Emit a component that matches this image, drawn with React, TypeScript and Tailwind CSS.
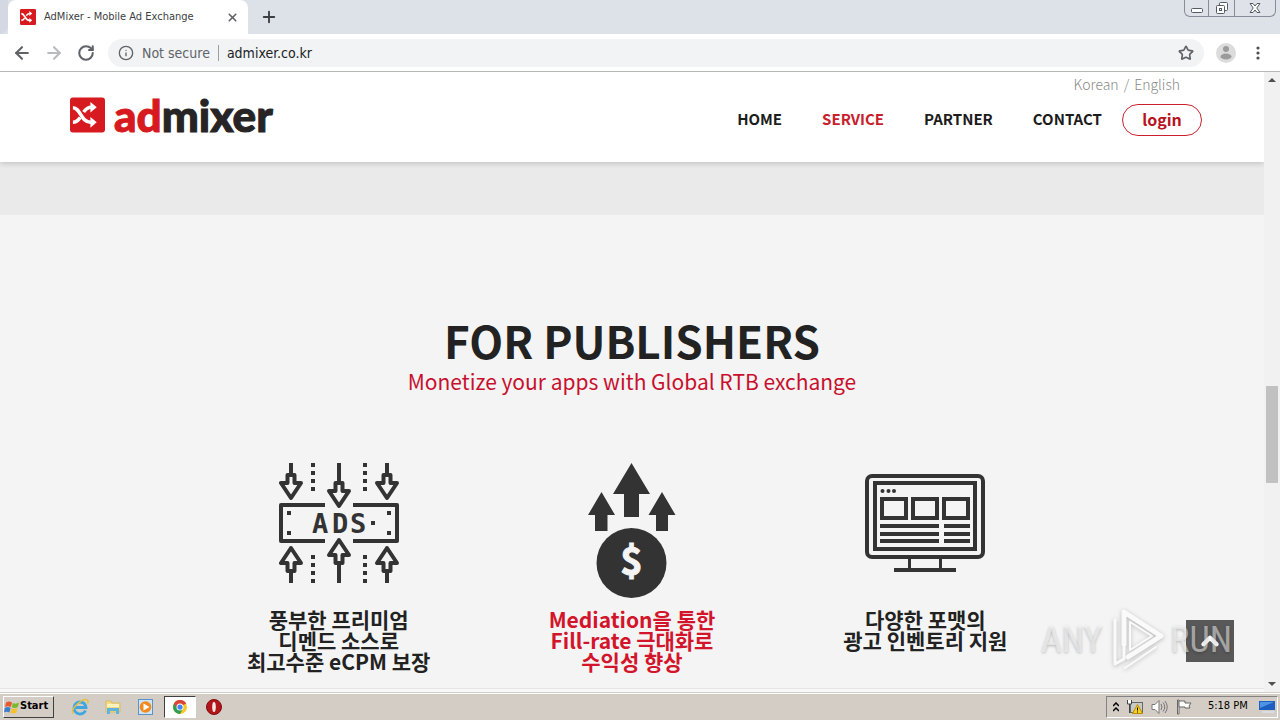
import { useState } from 'react';
import { ArrowLeft, ArrowRight, ChevronUp, Info, Plus, RotateCw, Star, X } from 'lucide-react';

interface Feature {
  id: string;
  lines: string[];
  active?: boolean;
  icon: React.ReactNode;
}

const navItems = [
  { label: 'HOME', active: false },
  { label: 'SERVICE', active: true },
  { label: 'PARTNER', active: false },
  { label: 'CONTACT', active: false },
];

function ShuffleMark({ className }: { className: string }) {
  return (
    <svg viewBox="0 0 36 36" className={className}>
      <rect width="36" height="36" rx="3" fill="#d71920" />
      <g fill="none" stroke="#fff" strokeWidth="3.6">
        <path d="M3 10.500c8 0 8 15 18 15h2" />
        <path d="M3 25.500c3.500 0 5.500-2 7.500-5M14 15c2-3 4-5 8-5" />
      </g>
      <path d="M21 4.500 27.500 10 21 15.500zM21 20 27.500 25.500 21 31z" fill="#fff" />
    </svg>
  );
}

function ArrowDownShape({ x, y, shaft }: { x: number; y: number; shaft: number }) {
  return (
    <>
      <path d={`M${x} ${y - shaft}V${y}`} />
      <path d={`M${x - 3.5} ${y + 1}h7v8h6.500L${x} ${y + 24}l-10 -15h6.500z`} />
    </>
  );
}

function AdsIcon() {
  const dots = [2, 10, 18, 26, 94, 102, 110, 118];
  return (
    <svg viewBox="0 0 120 120" className="h-[120px] w-[120px]">
      <g fill="none" stroke="#333" strokeWidth="4" strokeLinejoin="round">
        <ArrowDownShape x={12} y={11} shaft={11} />
        <ArrowDownShape x={60} y={19} shaft={19} />
        <ArrowDownShape x={108} y={11} shaft={11} />
        <g transform="matrix(1 0 0 -1 0 120)">
          <ArrowDownShape x={12} y={11} shaft={11} />
          <ArrowDownShape x={60} y={19} shaft={19} />
          <ArrowDownShape x={108} y={11} shaft={11} />
        </g>
        <path d="M46 42H2v36h44M74 42h44v36H74" />
      </g>
      <g fill="#333">
        {dots.map((y) => (
          <g key={y}>
            <rect x="32" y={y - 2} width="4" height="4" />
            <rect x="84" y={y - 2} width="4" height="4" />
          </g>
        ))}
        <rect x="8" y="48" width="4" height="4" />
        <rect x="108" y="48" width="4" height="4" />
        <rect x="8" y="68" width="4" height="4" />
        <rect x="108" y="68" width="4" height="4" />
        <rect x="92" y="58" width="4" height="4" />
        <text x="33 53 71" y="70" fontSize="27" fontWeight="700" fontFamily="'DejaVu Sans Mono', monospace">ADS</text>
      </g>
    </svg>
  );
}

function GrowthIcon() {
  return (
    <svg viewBox="0 0 88 136" className="h-[136px] w-[88px]">
      <g fill="#333">
        <path d="M43.500 0 62 31H51v23H36V31H25z" />
        <path d="M13.500 29 27 52h-7.500v16H7V52H0z" />
        <path d="M74 29 87.500 52H80v16H68V52h-7.500z" />
        <circle cx="43.500" cy="100" r="35" />
      </g>
      <text x="43.500" y="112" fill="#f4f4f4" stroke="#f4f4f4" strokeWidth="1" fontSize="38" fontWeight="700" textAnchor="middle" fontFamily="'Noto Sans CJK KR', sans-serif">$</text>
    </svg>
  );
}

function MonitorIcon() {
  return (
    <svg viewBox="0 -11 120 120" className="h-[120px] w-[120px]">
      <g fill="none" stroke="#333" strokeWidth="4">
        <rect x="2" y="2" width="116" height="81" rx="5" />
        <rect x="10" y="9" width="100" height="66" />
        <rect x="17" y="25" width="24" height="19" />
        <rect x="48" y="25" width="24" height="19" />
        <rect x="79" y="25" width="24" height="19" />
        <path d="M15 52h59M79 52h26M15 60h59M79 60h26M15 67h59M79 67h26" />
        <path d="M44.500 84v12M75.500 84v12" strokeWidth="3" />
        <path d="M29 96h62" />
      </g>
      <g fill="#333">
        <circle cx="17.500" cy="17" r="2" />
        <circle cx="23.500" cy="17" r="2" />
        <circle cx="29" cy="17" r="2" />
      </g>
    </svg>
  );
}

const features: Feature[] = [
  { id: 'premium', lines: ['풍부한 프리미엄', '디멘드 소스로', '최고수준 eCPM 보장'], icon: <AdsIcon /> },
  { id: 'mediation', lines: ['Mediation을 통한', 'Fill-rate 극대화로', '수익성 향상'], active: true, icon: <GrowthIcon /> },
  { id: 'formats', lines: ['다양한 포맷의', '광고 인벤토리 지원'], icon: <MonitorIcon /> },
];

function WindowControls() {
  return (
    <div className="mr-1 flex h-[17px] rounded-b-md border border-t-0 border-[#868c98] bg-[#dfe2e9]">
      <button aria-label="Minimize" className="flex w-6 items-center justify-center border-r border-[#868c98]">
        <svg viewBox="0 0 12 12" className="h-3 w-3"><rect x="0.500" y="6.500" width="11" height="4" rx="1" fill="#fff" stroke="#555b66" /></svg>
      </button>
      <button aria-label="Restore" className="flex w-[26px] items-center justify-center border-r border-[#868c98]">
        <svg viewBox="0 0 14 14" className="h-[14px] w-[14px]" fill="#fff" stroke="#555b66">
          <rect x="4.500" y="1.500" width="8" height="8" rx="1" />
          <rect x="1.500" y="4.500" width="8" height="8" rx="1" />
          <rect x="4.500" y="7.500" width="2" height="2" />
        </svg>
      </button>
      <button aria-label="Close window" className="flex w-10 items-center justify-center">
        <svg viewBox="0 0 12 12" className="h-3 w-3">
          <path d="M1 1.500h3l2 2.500 2-2.500h3L7.800 6 11 10.500H8L6 8l-2 2.500H1L4.200 6z" fill="#fff" stroke="#555b66" />
        </svg>
      </button>
    </div>
  );
}

function BrowserBar() {
  const [url, setUrl] = useState('admixer.co.kr');
  return (
    <div className="shrink-0 font-['DejaVu_Sans_Condensed','DejaVu_Sans',sans-serif]">
      <div className="flex h-[34px] justify-between bg-[#dde1e8]">
        <div className="flex">
          <div className="w-2 rounded-br-lg bg-[#d3d8e2]" />
          <div className="flex w-60 items-center rounded-t-lg bg-white pr-2 pl-3">
            <ShuffleMark className="h-4 w-4" />
            <span className="ml-2 flex-1 text-[11px] whitespace-nowrap text-[#3c4043]">AdMixer - Mobile Ad Exchange</span>
            <button aria-label="Close tab" className="flex h-4 w-4 items-center justify-center text-[#5f6368]">
              <X size={13} strokeWidth={3} />
            </button>
          </div>
          <button aria-label="New tab" className="ml-3 text-[#3c4043]">
            <Plus size={18} strokeWidth={2.5} />
          </button>
        </div>
        <WindowControls />
      </div>
      <div className="flex h-[38px] items-center border-b border-[#b5b8b5] bg-white pr-3 pl-3 text-[#5f6368]">
        <button aria-label="Back"><ArrowLeft size={20} strokeWidth={2.5} /></button>
        <button aria-label="Forward" className="ml-3 text-[#b9bbbe]"><ArrowRight size={20} strokeWidth={2.5} /></button>
        <button aria-label="Reload" className="ml-[13px]"><RotateCw size={18} strokeWidth={2.75} /></button>
        <div className="ml-[13px] flex h-7 flex-1 items-center rounded-full bg-[#f1f3f5] pr-[10px] pl-[10px]">
          <Info size={16} />
          <label htmlFor="url" className="ml-2 border-r border-[#9aa0a6] pr-2 text-sm leading-4 whitespace-nowrap">Not secure</label>
          <input
            id="url"
            value={url}
            onChange={(e) => setUrl(e.target.value)}
            className="ml-2 min-w-0 flex-1 bg-transparent text-sm leading-4 text-[#202124] outline-none"
          />
          <button aria-label="Bookmark"><Star size={16} strokeWidth={2.5} /></button>
        </div>
        <button aria-label="Profile" className="ml-3">
          <svg viewBox="0 0 20 20" className="h-5 w-5">
            <circle cx="10" cy="10" r="10" fill="#dcdcdc" />
            <circle cx="10" cy="6" r="3" fill="#9b9b9b" />
            <ellipse cx="10" cy="13.500" rx="5.500" ry="3" fill="#9b9b9b" />
          </svg>
        </button>
        <button aria-label="Menu" className="ml-3">
          <svg viewBox="0 0 20 20" className="h-5 w-5" fill="#4d5156">
            <circle cx="10" cy="5" r="1.600" />
            <circle cx="10" cy="10" r="1.600" />
            <circle cx="10" cy="15" r="1.600" />
          </svg>
        </button>
      </div>
    </div>
  );
}

function SiteHeader() {
  return (
    <header className="relative z-10 flex h-[90px] justify-between bg-white pr-[62px] pl-[70px] shadow-[0_1px_6px_rgba(0,0,0,0.2)]">
      <a href="#home" className="mt-[25px] flex h-9 items-center">
        <ShuffleMark className="h-9 w-[35px]" />
        <span className="ml-[9px] font-['Lato',sans-serif] text-[44px] leading-9 font-black text-[#d71920] [-webkit-text-stroke:1px]">
          ad<span className="text-[#272425]">mixer</span>
        </span>
      </a>
      <div className="flex flex-col items-end">
        <div className="flex h-8 gap-[5px] pt-[2px] pr-[22px] text-[14px] leading-5 font-light text-[#8a8a8a]">
          <a href="#ko">Korean</a>
          <span>/</span>
          <a href="#en">English</a>
        </div>
        <nav className="flex h-8 items-center gap-10 text-[15px] leading-6 font-bold text-[#1c1c1c]">
          {navItems.map((item) => (
            <a key={item.label} href={`#${item.label.toLowerCase()}`} className={`pb-[2px] ${item.active ? 'text-[#c8202c]' : ''}`}>
              {item.label}
            </a>
          ))}
          <button className="-ml-5 h-8 w-20 rounded-full border border-[#c8202c] pb-[2px] text-base leading-6 text-[#b8141f]">login</button>
        </nav>
      </div>
    </header>
  );
}

function Watermark() {
  return (
    <div className="pointer-events-none absolute right-8 bottom-5 flex items-center font-['Liberation_Sans_Narrow','Roboto_Condensed',sans-serif] text-[36px] leading-[64px] text-white/50 [text-shadow:0_1px_3px_rgba(0,0,0,0.25)]">
      <span>ANY</span>
      <svg viewBox="0 0 56 64" className="mr-1 ml-2 h-16 w-14 drop-shadow-[0_1px_2px_rgba(0,0,0,0.25)]" fill="none" stroke="#fafafa" strokeWidth="5" strokeLinejoin="round" strokeLinecap="round">
        <path d="M14 36V4l37 24-33 21" />
        <path d="M5 12v44l9-5V22" strokeWidth="3" />
        <path d="M15 60 46 39M20 14v28l22-14z" strokeWidth="2" />
      </svg>
      <span>RUN</span>
    </div>
  );
}

function Scrollbar() {
  return (
    <div className="flex w-4 shrink-0 flex-col items-center justify-between bg-[#f1f1f1] py-[6px]">
      <svg viewBox="0 0 8 4" className="h-1 w-2"><path d="M0 4 4 0l4 4z" fill="#505050" /></svg>
      <div className="flex w-full flex-1 flex-col items-center">
        <div className="grow-[304]" />
        <div className="h-[97px] w-3 bg-[#c1c1c1]" />
        <div className="grow-[199]" />
      </div>
      <svg viewBox="0 0 8 4" className="h-1 w-2"><path d="m0 0 4 4 4-4z" fill="#505050" /></svg>
    </div>
  );
}

function Taskbar() {
  return (
    <footer className="flex h-7 shrink-0 items-center justify-between border-t border-[#d4cec6] bg-[#d4cdc5] pr-[2px] pl-[3px] font-['DejaVu_Sans_Condensed','DejaVu_Sans',sans-serif] shadow-[inset_0_1px_0_#fff]">
      <div className="flex items-center">
        <button className="flex h-[22px] w-[51px] items-center border border-t-white border-r-[#404040] border-b-[#404040] border-l-white text-[11px] font-bold text-black">
          <svg viewBox="0 0 16 16" className="h-4 w-4 shrink-0">
            <path d="M2 3.500q3-2 6 0L6.800 8q-3-1.500-5.800 0z" fill="#e8592b" />
            <path d="M8.800 4q3 1.500 6.200-.500L13.800 8q-3 1.800-6 .200z" fill="#7ab82e" />
            <path d="M.800 9q3-1.800 5.800 0L5.400 13.500q-3-1.600-5.400 0z" fill="#3b7ed0" />
            <path d="M7.500 9.300q3 1.500 6 0L12.300 13.500q-3 1.800-6 .300z" fill="#f6c12c" />
          </svg>
          Start
        </button>
        <button aria-label="Internet Explorer" className="ml-4 flex h-5 w-5 items-center justify-center">
          <svg viewBox="0 0 18 18" className="h-[18px] w-[18px]" fill="none">
            <path d="M14.500 12.500A6 6 0 1 1 15 9.500H4.500" stroke="#3fa7e0" strokeWidth="2.800" />
            <path d="M2 15.500C-1 11 12-1 16.500 2c1 1 .500 2.500 0 3.500" stroke="#e8bf3a" strokeWidth="1.500" />
          </svg>
        </button>
        <button aria-label="Explorer" className="ml-[13px] flex h-5 w-5 items-center justify-center">
          <svg viewBox="0 0 18 18" className="h-[18px] w-[18px]">
            <path d="M2 3h5l1 2h8v9H2z" fill="#f2dc86" stroke="#d9bd5c" />
            <path d="M3 6h12v3H3z" fill="#fbf2c0" />
            <path d="M3 10h12v6h-3v-3H6v3H3z" fill="#5eb4de" />
          </svg>
        </button>
        <button aria-label="Media Player" className="ml-[13px] flex h-5 w-5 items-center justify-center">
          <svg viewBox="0 0 18 18" className="h-[18px] w-[18px]">
            <rect x="1.500" y="1.500" width="14" height="15" fill="#cfe3f5" stroke="#5a93cc" />
            <circle cx="8.500" cy="9" r="5.800" fill="#f08a1d" />
            <path d="m6.500 5.500 6 3.500-6 3.500z" fill="#fff" />
          </svg>
        </button>
        <button aria-label="Chrome" className="ml-2 flex h-[22px] w-8 items-center justify-center border border-t-[#404040] border-r-white border-b-white border-l-[#404040] bg-white">
          <svg viewBox="0 0 16 16" className="h-[14px] w-[14px]">
            <circle cx="8" cy="8" r="8" fill="#f9c926" />
            <path d="M8 8 1.100 4A8 8 0 0 1 14.900 4z" fill="#db4437" />
            <path d="M8 8 1.100 4A8 8 0 0 0 8 16l3.500-6z" fill="#2f9e50" />
            <path d="M8 4h7a8 8 0 0 0-13.900 0L5 10z" fill="#db4437" />
            <circle cx="8" cy="8" r="4" fill="#fff" />
            <circle cx="8" cy="8" r="3" fill="#4285f4" />
          </svg>
        </button>
        <button aria-label="Opera" className="ml-2 flex h-5 w-5 items-center justify-center">
          <svg viewBox="0 0 16 16" className="h-4 w-4">
            <circle cx="8" cy="8" r="7.500" fill="#b3151a" stroke="#7e0d10" />
            <ellipse cx="8" cy="8" rx="1.800" ry="5" fill="#f3e9e9" />
          </svg>
        </button>
      </div>
      <div className="flex h-[22px] w-[172px] items-center justify-between border border-t-[#848284] border-r-white border-b-white border-l-[#848284] pr-[2px] pl-[6px] text-[11px] text-black">
        <svg viewBox="0 0 6 10" className="h-[10px] w-[6px]" fill="none" stroke="#000" strokeWidth="1.500"><path d="m0 4 3-3 3 3M0 9l3-3 3 3" /></svg>
        <svg viewBox="0 0 18 16" className="h-4 w-[18px]">
          <rect x="4.500" y="3.500" width="12" height="10" fill="#c9c9c9" stroke="#666" />
          <path d="M1.500 1v4h4V1M3.500 5v9" stroke="#444" fill="#fff" />
          <path d="m11.500 5.500 5 9h-10z" fill="#f8d21c" stroke="#b88f00" />
          <path d="M11.500 8.500v3M11.500 12.500v1" stroke="#000" />
        </svg>
        <svg viewBox="0 0 17 16" className="h-4 w-[17px]" fill="none" stroke="#777">
          <path d="M1 5.500h3l4-4v13l-4-4H1z" fill="#fff" />
          <path d="M10 5q2 3 0 6M12 3.500q3.500 4.500 0 9M14 2q4.500 6 0 12" />
        </svg>
        <svg viewBox="0 0 17 16" className="h-4 w-[17px]" fill="#fff" stroke="#666">
          <path d="M1.500 1v14h1.500V1z" />
          <path d="M3 2h6v2h6l-2 3 1 2H9V8H3z" />
        </svg>
        <span className="pr-1 pl-2 whitespace-nowrap">5:18 PM</span>
        <svg viewBox="0 0 16 14" className="h-[14px] w-4">
          <path d="M0 1h16v9H0z" fill="#1d5fc0" />
          <path d="M1 2h14L1 8z" fill="#4f93e4" />
          <path d="M3 11h12v2H3z" fill="#d8dce4" />
        </svg>
      </div>
    </footer>
  );
}

export default function App() {
  return (
    <div className="flex h-screen flex-col overflow-hidden bg-[#f4f4f4]">
      <BrowserBar />
      <div className="flex min-h-0 flex-1">
        <div className="relative min-w-0 flex-1 overflow-hidden font-['Noto_Sans_CJK_KR',sans-serif]">
          <SiteHeader />
          <div className="h-[53px] bg-[#eaeaea]" />
          <section className="bg-[#f4f4f4] pt-[100px] pb-4 text-center">
            <h2 className="text-[44px] leading-[50px] font-bold text-[#222]">FOR PUBLISHERS</h2>
            <p className="text-[21px] leading-8 text-[#c8102e]">Monetize your apps with Global RTB exchange</p>
            <div className="mx-auto mt-[66px] grid max-w-[880px] grid-cols-3">
              {features.map((feature) => (
                <div key={feature.id} className="flex flex-col items-center">
                  <div className="h-[136px]">{feature.icon}</div>
                  <h3 className={`mt-[10px] text-[21px] leading-[21px] font-bold ${feature.active ? 'text-[#d3152b]' : 'text-[#222]'}`}>
                    {feature.lines.map((line) => (
                      <span key={line} className="block">{line}</span>
                    ))}
                  </h3>
                </div>
              ))}
            </div>
          </section>
          <div className="h-1 border-t border-[#ebe6e6] bg-[#f8f8f8]" />
          <button aria-label="Back to top" className="absolute right-[30px] bottom-[30px] flex h-[42px] w-12 items-center justify-center bg-[#585858] text-white">
            <ChevronUp size={26} strokeWidth={4} />
          </button>
          <Watermark />
        </div>
        <Scrollbar />
      </div>
      <Taskbar />
    </div>
  );
}
